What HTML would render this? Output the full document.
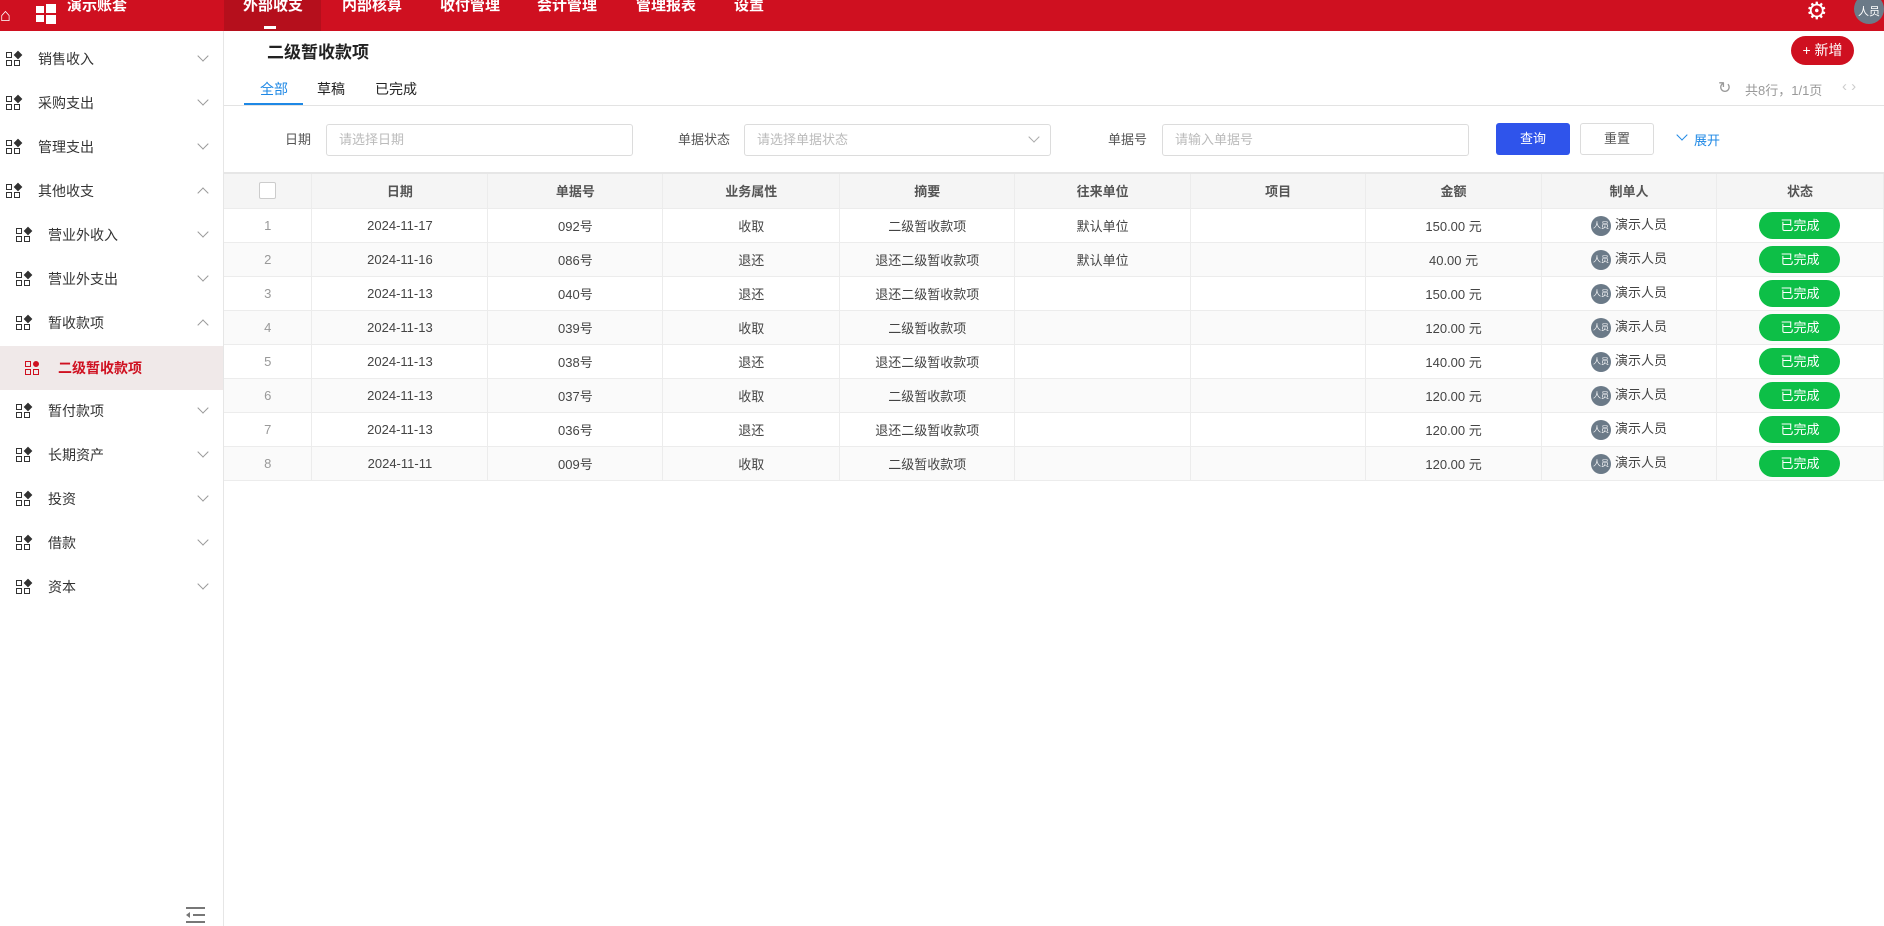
<!DOCTYPE html>
<html><head><meta charset="utf-8"><style>
*{box-sizing:border-box;margin:0;padding:0}
body{width:1884px;height:926px;overflow:hidden;background:#fff;font-family:"Liberation Sans","Noto Sans CJK SC",sans-serif;color:#333;position:relative}
.a{position:absolute}
.top{left:0;top:0;width:1884px;height:31px;background:#cf1020}
.nav{top:0;height:31px;line-height:14px;color:#fff;font-size:15px;font-weight:bold}
.side{left:0;top:31px;width:224px;height:895px;border-right:1px solid #e6e6e6}
.si{height:44px;line-height:44px;font-size:14px;color:#333;position:absolute;left:0;width:223px}
.ic{position:absolute;top:15px;width:16px;height:15px}
.ic i{position:absolute;width:6px;height:6px;border:1px solid #333}
.ch{position:absolute;right:16px;top:15px;width:8px;height:8px;border-right:1px solid #999;border-bottom:1px solid #999;transform:rotate(45deg)}
.ch.up{top:20px;transform:rotate(-135deg)}
.inp{height:32px;border:1px solid #dcdcdc;border-radius:3px;font-size:13px;color:#bbb;line-height:30px;padding-left:12px}
.lbl{font-size:13px;color:#555;line-height:32px}
table{border-collapse:collapse;position:absolute;left:224px;top:174px;width:1660px;font-size:13px;color:#444}
td,th{border-right:1px solid #ececec;border-bottom:1px solid #ececec;text-align:center;height:34px;padding:0}
th{background:#f5f5f5;font-weight:bold;color:#555}
tr:nth-child(odd) td{background:#fafafa}
.pill{display:inline-block;width:81px;height:27px;line-height:27px;border-radius:14px;background:#0dbf47;color:#fff;font-size:13px}
.av{display:inline-block;width:20px;height:20px;border-radius:10px;background:#6b7a88;color:#fff;font-size:8px;line-height:20px;vertical-align:middle;margin-right:4px}
</style></head><body>
<div class="a top"></div>
<div class="a" style="left:0;top:5px;color:#fff;font-size:18px">&#8962;</div>
<svg class="a" style="left:36px;top:4px" width="20" height="20"><rect x="0" y="2" width="8" height="7" fill="#fff"/><rect x="10" y="0" width="10" height="9" fill="#fff"/><rect x="0" y="11" width="8" height="7" fill="#fff"/><rect x="10" y="11" width="10" height="9" fill="#fff"/></svg>
<div class="a nav" style="left:67px;top:-1px">演示账套</div>
<div class="a" style="left:224px;top:0;width:97px;height:31px;background:#b50f1c"></div>
<div class="a" style="left:264px;top:26px;width:12px;height:3px;background:#fff"></div>
<div class="a nav" style="left:243px;top:-1px">外部收支</div>
<div class="a nav" style="left:342px;top:-1px">内部核算</div>
<div class="a nav" style="left:440px;top:-1px">收付管理</div>
<div class="a nav" style="left:537px;top:-1px">会计管理</div>
<div class="a nav" style="left:636px;top:-1px">管理报表</div>
<div class="a nav" style="left:734px;top:-1px">设置</div>
<div class="a" style="left:1806px;top:-3px;color:#fff;font-size:24px">&#9881;</div>
<div class="a" style="left:1854px;top:-6px;width:30px;height:30px;border-radius:15px;background:#6b7a88;color:#fff;font-size:11px;line-height:36px;text-align:center">人员</div>

<div class="a side">
<div class="si" style="top:6px"><span class="ic" style="left:6px"><i style="left:0;top:0"></i><i style="left:0;top:8px"></i><i style="left:8px;top:8px"></i><i style="left:9px;top:0;background:#333;transform:rotate(45deg)"></i></span><span style="margin-left:38px">销售收入</span><span class="ch"></span></div>
<div class="si" style="top:50px"><span class="ic" style="left:6px"><i style="left:0;top:0"></i><i style="left:0;top:8px"></i><i style="left:8px;top:8px"></i><i style="left:9px;top:0;background:#333;transform:rotate(45deg)"></i></span><span style="margin-left:38px">采购支出</span><span class="ch"></span></div>
<div class="si" style="top:94px"><span class="ic" style="left:6px"><i style="left:0;top:0"></i><i style="left:0;top:8px"></i><i style="left:8px;top:8px"></i><i style="left:9px;top:0;background:#333;transform:rotate(45deg)"></i></span><span style="margin-left:38px">管理支出</span><span class="ch"></span></div>
<div class="si" style="top:138px"><span class="ic" style="left:6px"><i style="left:0;top:0"></i><i style="left:0;top:8px"></i><i style="left:8px;top:8px"></i><i style="left:9px;top:0;background:#333;transform:rotate(45deg)"></i></span><span style="margin-left:38px">其他收支</span><span class="ch up"></span></div>
<div class="si" style="top:182px"><span class="ic" style="left:16px"><i style="left:0;top:0"></i><i style="left:0;top:8px"></i><i style="left:8px;top:8px"></i><i style="left:9px;top:0;background:#333;transform:rotate(45deg)"></i></span><span style="margin-left:48px">营业外收入</span><span class="ch"></span></div>
<div class="si" style="top:226px"><span class="ic" style="left:16px"><i style="left:0;top:0"></i><i style="left:0;top:8px"></i><i style="left:8px;top:8px"></i><i style="left:9px;top:0;background:#333;transform:rotate(45deg)"></i></span><span style="margin-left:48px">营业外支出</span><span class="ch"></span></div>
<div class="si" style="top:270px"><span class="ic" style="left:16px"><i style="left:0;top:0"></i><i style="left:0;top:8px"></i><i style="left:8px;top:8px"></i><i style="left:9px;top:0;background:#333;transform:rotate(45deg)"></i></span><span style="margin-left:48px">暂收款项</span><span class="ch up"></span></div>
<div class="si" style="top:315px;background:#f0e9e9;color:#cf1020;font-weight:bold"><span class="ic" style="left:25px"><i style="left:0;top:0;border-color:#cf1020"></i><i style="left:0;top:8px;border-color:#cf1020"></i><i style="left:8px;top:8px;border-color:#cf1020"></i><i style="left:8px;top:0;background:#cf1020;border-color:#cf1020;border-radius:3px"></i></span><span style="margin-left:58px">二级暂收款项</span></div>
<div class="si" style="top:358px"><span class="ic" style="left:16px"><i style="left:0;top:0"></i><i style="left:0;top:8px"></i><i style="left:8px;top:8px"></i><i style="left:9px;top:0;background:#333;transform:rotate(45deg)"></i></span><span style="margin-left:48px">暂付款项</span><span class="ch"></span></div>
<div class="si" style="top:402px"><span class="ic" style="left:16px"><i style="left:0;top:0"></i><i style="left:0;top:8px"></i><i style="left:8px;top:8px"></i><i style="left:9px;top:0;background:#333;transform:rotate(45deg)"></i></span><span style="margin-left:48px">长期资产</span><span class="ch"></span></div>
<div class="si" style="top:446px"><span class="ic" style="left:16px"><i style="left:0;top:0"></i><i style="left:0;top:8px"></i><i style="left:8px;top:8px"></i><i style="left:9px;top:0;background:#333;transform:rotate(45deg)"></i></span><span style="margin-left:48px">投资</span><span class="ch"></span></div>
<div class="si" style="top:490px"><span class="ic" style="left:16px"><i style="left:0;top:0"></i><i style="left:0;top:8px"></i><i style="left:8px;top:8px"></i><i style="left:9px;top:0;background:#333;transform:rotate(45deg)"></i></span><span style="margin-left:48px">借款</span><span class="ch"></span></div>
<div class="si" style="top:534px"><span class="ic" style="left:16px"><i style="left:0;top:0"></i><i style="left:0;top:8px"></i><i style="left:8px;top:8px"></i><i style="left:9px;top:0;background:#333;transform:rotate(45deg)"></i></span><span style="margin-left:48px">资本</span><span class="ch"></span></div>
<svg class="a" style="left:185px;top:876px" width="22" height="16"><rect x="1" y="0" width="19" height="2" fill="#777"/><rect x="8" y="7" width="12" height="2" fill="#777"/><rect x="1" y="14" width="19" height="2" fill="#777"/><path d="M1 8 L5 5 L5 11Z" fill="#777"/></svg>
</div>

<div class="a" style="left:267px;top:38px;font-size:17px;font-weight:bold;color:#222">二级暂收款项</div>
<div class="a" style="left:1791px;top:36px;width:63px;height:29px;border-radius:15px;background:#cf1020;color:#fff;font-size:14px;line-height:29px;text-align:center">+ 新增</div>
<div class="a" style="left:260px;top:79px;font-size:14px;color:#1e88e5">全部</div>
<div class="a" style="left:317px;top:79px;font-size:14px;color:#222">草稿</div>
<div class="a" style="left:375px;top:79px;font-size:14px;color:#222">已完成</div>
<div class="a" style="left:244px;top:103px;width:59px;height:3px;background:#1e88e5"></div>
<div class="a" style="left:224px;top:105px;width:1660px;height:1px;background:#e3e3e3"></div>
<div class="a" style="left:1718px;top:78px;font-size:16px;color:#999">&#8635;</div>
<div class="a" style="left:1745px;top:80px;font-size:13px;color:#999">共8行，1/1页</div>
<div class="a" style="left:1842px;top:78px;font-size:15px;color:#ccc">&lsaquo; &rsaquo;</div>

<div class="a lbl" style="left:285px;top:124px">日期</div>
<div class="a inp" style="left:326px;top:124px;width:307px">请选择日期</div>
<div class="a lbl" style="left:678px;top:124px">单据状态</div>
<div class="a inp" style="left:744px;top:124px;width:307px">请选择单据状态</div>
<div class="a" style="left:1030px;top:133px;width:8px;height:8px;border-right:1px solid #aaa;border-bottom:1px solid #aaa;transform:rotate(45deg)"></div>
<div class="a lbl" style="left:1108px;top:124px">单据号</div>
<div class="a inp" style="left:1162px;top:124px;width:307px">请输入单据号</div>
<div class="a" style="left:1496px;top:123px;width:74px;height:32px;border-radius:3px;background:#2f54eb;color:#fff;font-size:13px;line-height:32px;text-align:center">查询</div>
<div class="a" style="left:1580px;top:123px;width:74px;height:32px;border-radius:3px;border:1px solid #dcdcdc;color:#555;font-size:13px;line-height:30px;text-align:center">重置</div>
<div class="a" style="left:1678px;top:131px;width:8px;height:8px;border-right:1px solid #1e88e5;border-bottom:1px solid #1e88e5;transform:rotate(45deg)"></div>
<div class="a" style="left:1694px;top:130px;font-size:13px;color:#1e88e5">展开</div>
<div class="a" style="left:224px;top:172px;width:1660px;height:2px;background:#e6e6e6"></div>

<table>
<colgroup><col style="width:88px"><col style="width:176px"><col style="width:175px"><col style="width:177px"><col style="width:175px"><col style="width:176px"><col style="width:175px"><col style="width:176px"><col style="width:175px"><col style="width:167px"></colgroup>
<tr><th><span style="display:inline-block;width:17px;height:17px;border:1px solid #ccc;border-radius:2px;background:#fff;vertical-align:middle"></span></th><th>日期</th><th>单据号</th><th>业务属性</th><th>摘要</th><th>往来单位</th><th>项目</th><th>金额</th><th>制单人</th><th>状态</th></tr>
<tr><td style="color:#999">1</td><td>2024-11-17</td><td>092号</td><td>收取</td><td>二级暂收款项</td><td>默认单位</td><td></td><td>150.00 元</td><td><span class="av">人员</span>演示人员</td><td><span class="pill">已完成</span></td></tr>
<tr><td style="color:#999">2</td><td>2024-11-16</td><td>086号</td><td>退还</td><td>退还二级暂收款项</td><td>默认单位</td><td></td><td>40.00 元</td><td><span class="av">人员</span>演示人员</td><td><span class="pill">已完成</span></td></tr>
<tr><td style="color:#999">3</td><td>2024-11-13</td><td>040号</td><td>退还</td><td>退还二级暂收款项</td><td></td><td></td><td>150.00 元</td><td><span class="av">人员</span>演示人员</td><td><span class="pill">已完成</span></td></tr>
<tr><td style="color:#999">4</td><td>2024-11-13</td><td>039号</td><td>收取</td><td>二级暂收款项</td><td></td><td></td><td>120.00 元</td><td><span class="av">人员</span>演示人员</td><td><span class="pill">已完成</span></td></tr>
<tr><td style="color:#999">5</td><td>2024-11-13</td><td>038号</td><td>退还</td><td>退还二级暂收款项</td><td></td><td></td><td>140.00 元</td><td><span class="av">人员</span>演示人员</td><td><span class="pill">已完成</span></td></tr>
<tr><td style="color:#999">6</td><td>2024-11-13</td><td>037号</td><td>收取</td><td>二级暂收款项</td><td></td><td></td><td>120.00 元</td><td><span class="av">人员</span>演示人员</td><td><span class="pill">已完成</span></td></tr>
<tr><td style="color:#999">7</td><td>2024-11-13</td><td>036号</td><td>退还</td><td>退还二级暂收款项</td><td></td><td></td><td>120.00 元</td><td><span class="av">人员</span>演示人员</td><td><span class="pill">已完成</span></td></tr>
<tr><td style="color:#999">8</td><td>2024-11-11</td><td>009号</td><td>收取</td><td>二级暂收款项</td><td></td><td></td><td>120.00 元</td><td><span class="av">人员</span>演示人员</td><td><span class="pill">已完成</span></td></tr>
</table>
</body></html>
